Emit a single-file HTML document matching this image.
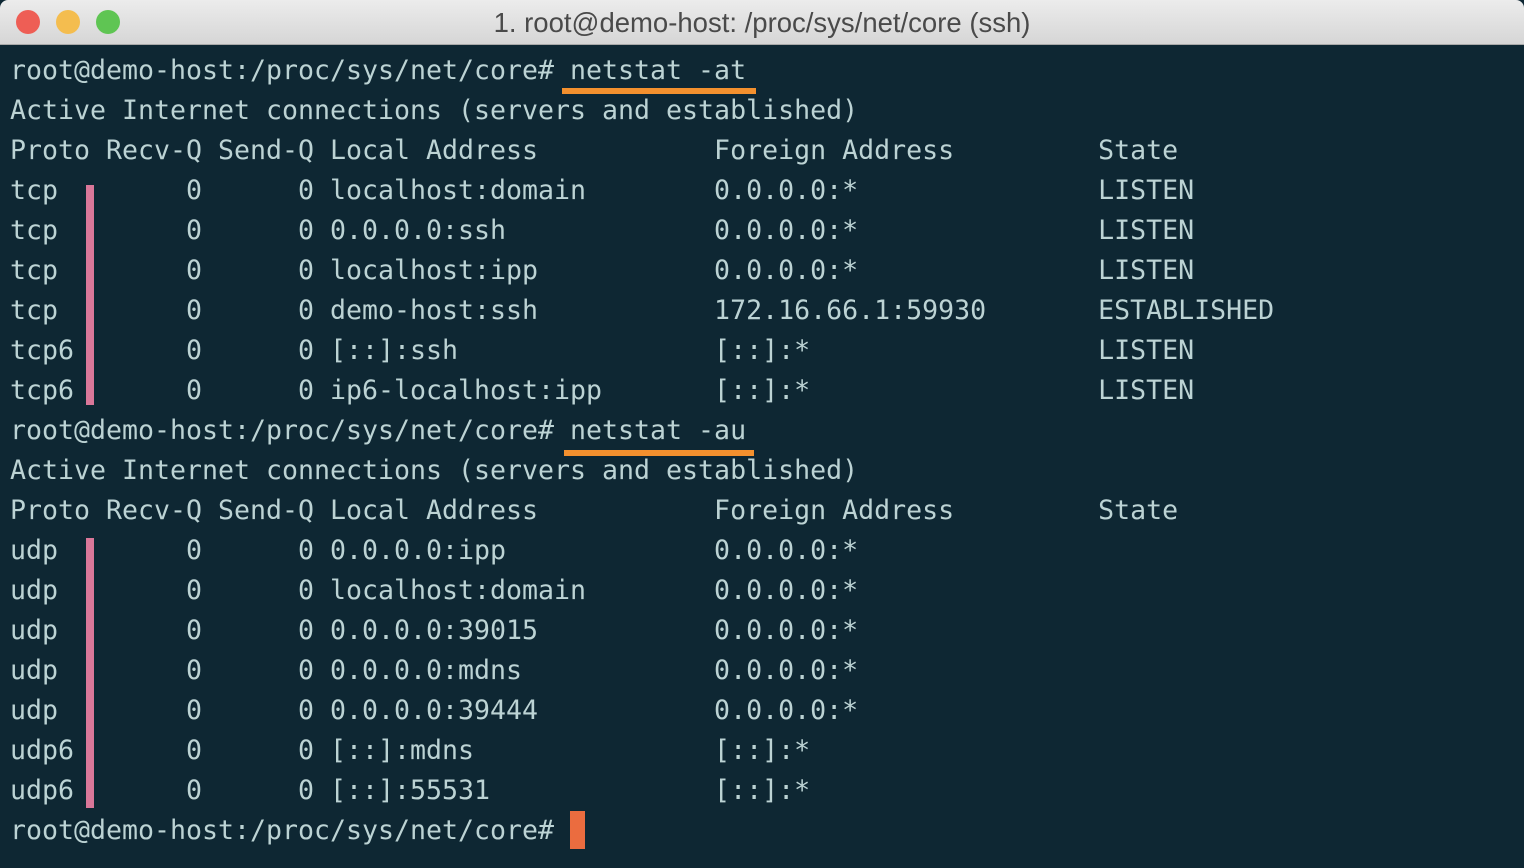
<!DOCTYPE html>
<html><head><meta charset="utf-8"><style>
html,body{margin:0;padding:0;width:1524px;height:868px;overflow:hidden;background:#0e2733;}
.tb{position:absolute;left:0;top:0;width:1524px;height:44px;background:linear-gradient(#ececec,#d6d6d6);border-bottom:1px solid #a9a9a9;border-radius:8px 8px 0 0;}
.tl{position:absolute;top:10px;width:24px;height:24px;border-radius:50%;}
.title{position:absolute;left:0;right:0;top:7px;text-align:center;font:27.5px "Liberation Sans",sans-serif;color:#4a4a4a;}
pre{position:absolute;left:10px;top:51px;margin:0;font-family:"DejaVu Sans Mono","Liberation Mono",monospace;font-size:26.58px;line-height:40px;color:#bcd3d4;}
.bar{position:absolute;background:#d97799;width:8px;left:86px;}
.ul{position:absolute;background:#f3902e;height:6px;}
</style></head><body>
<div class="tb">
<div class="tl" style="left:16px;background:#ee5e55"></div>
<div class="tl" style="left:56px;background:#f4bd4f"></div>
<div class="tl" style="left:96px;background:#5fc553"></div>
<div class="title">1. root@demo-host: /proc/sys/net/core (ssh)</div>
</div>
<pre>root@demo-host:/proc/sys/net/core# netstat -at
Active Internet connections (servers and established)
Proto Recv-Q Send-Q Local Address           Foreign Address         State
tcp        0      0 localhost:domain        0.0.0.0:*               LISTEN
tcp        0      0 0.0.0.0:ssh             0.0.0.0:*               LISTEN
tcp        0      0 localhost:ipp           0.0.0.0:*               LISTEN
tcp        0      0 demo-host:ssh           172.16.66.1:59930       ESTABLISHED
tcp6       0      0 [::]:ssh                [::]:*                  LISTEN
tcp6       0      0 ip6-localhost:ipp       [::]:*                  LISTEN
root@demo-host:/proc/sys/net/core# netstat -au
Active Internet connections (servers and established)
Proto Recv-Q Send-Q Local Address           Foreign Address         State
udp        0      0 0.0.0.0:ipp             0.0.0.0:*
udp        0      0 localhost:domain        0.0.0.0:*
udp        0      0 0.0.0.0:39015           0.0.0.0:*
udp        0      0 0.0.0.0:mdns            0.0.0.0:*
udp        0      0 0.0.0.0:39444           0.0.0.0:*
udp6       0      0 [::]:mdns               [::]:*
udp6       0      0 [::]:55531              [::]:*
root@demo-host:/proc/sys/net/core# </pre>
<div class="bar" style="top:185px;height:220px"></div>
<div class="bar" style="top:538px;height:270px"></div>
<div class="ul" style="left:562px;top:88px;width:194px"></div>
<div class="ul" style="left:564px;top:450px;width:190px"></div>
<div style="position:absolute;left:570px;top:811px;width:15px;height:38px;background:#eb6c3f"></div>
</body></html>
